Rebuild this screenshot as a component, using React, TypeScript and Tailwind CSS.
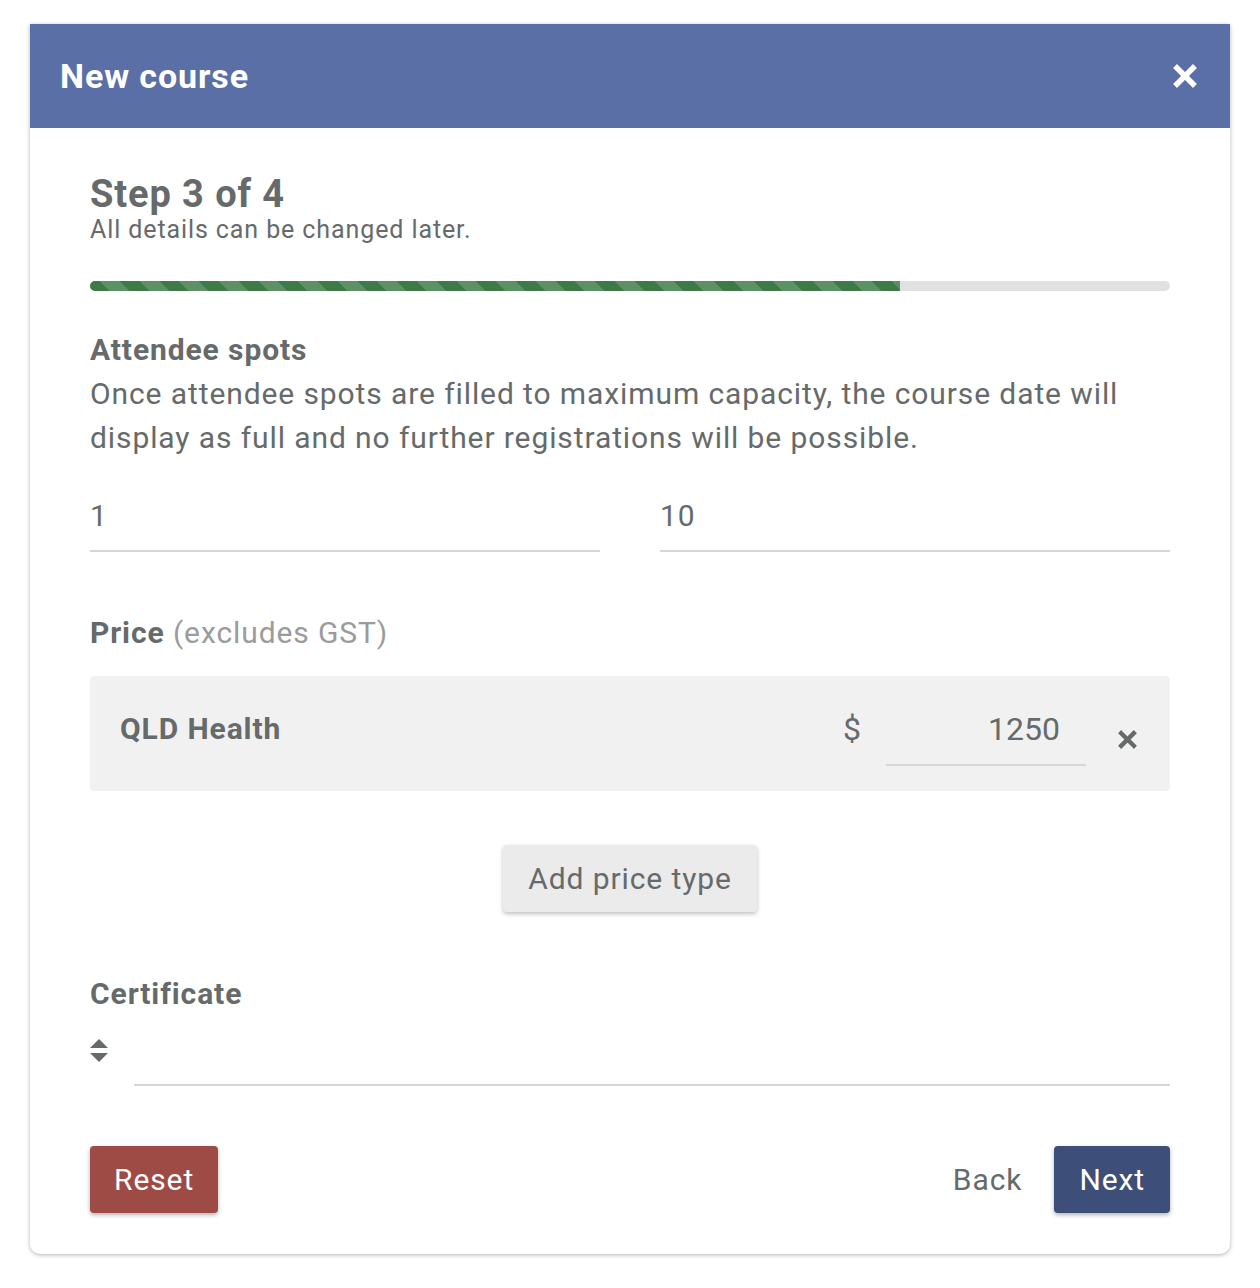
import React from 'react';

const FONT = { fontFamily: 'Roboto, "Noto Sans", sans-serif' };

/** Bold "times" cross used for close / remove buttons */
function Cross({ size, className }: { size: number; className?: string }) {
  return (
    <svg width={size} height={size} viewBox="0 0 24 24" className={className} aria-hidden="true">
      <path d="M4 4 L20 20 M20 4 L4 20" stroke="currentColor" strokeWidth="5.5" strokeLinecap="square" fill="none" />
    </svg>
  );
}

function SortIcon() {
  return (
    <svg width="18" height="24" viewBox="0 0 18 24" aria-hidden="true" className="text-[#666a6a]">
      <path d="M9 0 L18 9 L0 9 Z" fill="currentColor" />
      <path d="M0 14 L18 14 L9 23 Z" fill="currentColor" />
    </svg>
  );
}

function UnderlineInput({ value }: { value: string }) {
  return (
    <div className="h-[64px] pb-[7px] border-b-2 border-[#d6d6d6] flex items-center text-[30px] text-[#666a6a]">
      {value}
    </div>
  );
}

export default function App() {
  return (
    <div className="min-h-[1288px] bg-white pt-[24px] px-[30px] tracking-[0.9px]" style={FONT}>
      <div className="w-[1200px] rounded-b-[10px] bg-white shadow-[0_1px_4px_rgba(0,0,0,0.3)] overflow-hidden">
        {/* Header */}
        <div className="h-[104px] bg-[#5a6fa6] flex items-center justify-between pl-[30px] pr-[33px]">
          <h1 className="text-[34px] font-bold text-white leading-none">New course</h1>
          <button className="text-white">
            <Cross size={24} />
          </button>
        </div>

        {/* Body */}
        <div className="px-[60px] pt-[44px] pb-[41px] text-[#666a6a]">
          <h2 className="text-[38px] font-bold leading-[44px]">Step 3 of 4</h2>
          <p className="text-[25px] leading-[28px]">All details can be changed later.</p>

          {/* Progress */}
          <div className="mt-[37px] h-[10px] rounded-full bg-[#e1e1e1] overflow-hidden">
            <div className="h-full w-3/4 bg-[repeating-linear-gradient(45deg,#3e7a47_0px,#3e7a47_14px,#5e9066_14px,#5e9066_28px)]" />
          </div>

          {/* Attendee spots */}
          <h3 className="mt-[41px] text-[30px] font-bold leading-[36px]">Attendee spots</h3>
          <p className="mt-[4px] text-[30px] leading-[44px]">
            Once attendee spots are filled to maximum capacity, the course date will display as full and no further
            registrations will be possible.
          </p>

          <div className="mt-[28px] grid grid-cols-2 gap-[60px]">
            <UnderlineInput value="1" />
            <UnderlineInput value="10" />
          </div>

          {/* Price */}
          <h3 className="mt-[63px] text-[30px] leading-[36px]">
            <span className="font-bold">Price</span> <span className="text-[#9b9b9b]">(excludes GST)</span>
          </h3>

          <div className="mt-[25px] h-[115px] rounded-[4px] bg-[#f1f1f1] flex items-start pt-[35px] pl-[30px] pr-[33px]">
            <span className="text-[30px] font-bold leading-[36px] flex-1">QLD Health</span>
            <span className="text-[32px] leading-[36px] mr-[24px]">$</span>
            <div className="w-[200px] h-[55px] border-b-2 border-[#d6d6d6] text-right pr-[26px] text-[32px] leading-[36px] tracking-normal">
              1250
            </div>
            <button className="ml-[32px] mt-[19px] text-[#666a6a]">
              <Cross size={19} />
            </button>
          </div>

          <div className="mt-[54px] flex justify-center">
            <button className="h-[67px] px-[25px] rounded-[4px] bg-[#ebebeb] text-[30px] text-[#666a6a] shadow-[0_2px_4px_rgba(0,0,0,0.25)]">
              Add price type
            </button>
          </div>

          {/* Certificate */}
          <h3 className="mt-[64px] text-[30px] font-bold leading-[36px]">Certificate</h3>
          <div className="mt-[16px] flex items-end gap-[26px]">
            <div className="pb-[23px]">
              <SortIcon />
            </div>
            <div className="flex-1 h-[58px] border-b-2 border-[#d6d6d6]" />
          </div>

          {/* Footer */}
          <div className="mt-[60px] flex items-center justify-between">
            <button className="h-[67px] px-[24px] rounded-[4px] bg-[#9e4a45] text-white text-[30px] shadow-[0_2px_4px_rgba(0,0,0,0.3)]">
              Reset
            </button>
            <div className="flex items-center gap-[32px]">
              <button className="text-[30px] text-[#666a6a]">Back</button>
              <button className="h-[67px] px-[25px] rounded-[4px] bg-[#3d4f78] text-white text-[30px] shadow-[0_2px_4px_rgba(0,0,0,0.3)]">
                Next
              </button>
            </div>
          </div>
        </div>
      </div>
    </div>
  );
}
